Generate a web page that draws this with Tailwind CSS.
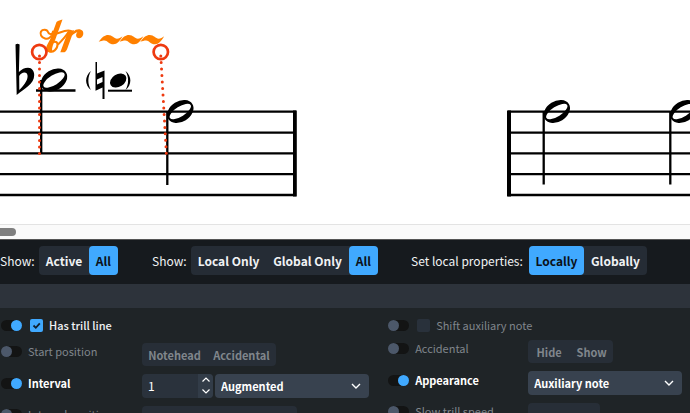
<!DOCTYPE html>
<html lang="en">
<head>
  <meta charset="UTF-8" />
  <meta name="viewport" content="width=device-width, initial-scale=1.0" />
  <title>Trill properties</title>
  <script src="https://cdn.jsdelivr.net/npm/@tailwindcss/browser@4"></script>
</head>
<body class="h-screen flex flex-col overflow-hidden bg-[#1f2427] font-['Noto_Sans_CJK_SC','Open_Sans',sans-serif] text-xs leading-4 text-[#f0f2f4]">

  <!-- Score -->
  <main class="h-56 shrink-0 overflow-hidden bg-white">
    <svg class="block h-56 w-[690px] max-w-none" viewBox="0 0 690 224" role="img" aria-label="Score">
      <defs>
        <path id="half" fill-rule="evenodd" transform="rotate(-32)" d="M-14.2 0a14.2 10.2 0 1 0 28.4 0a14.2 10.2 0 1 0 -28.4 0zM-12.2 0a12.2 4.9 0 1 0 24.4 0a12.2 4.9 0 1 0 -24.4 0z" />
        <path id="wave" d="M-.3 6.800C3 2 6 0 9 0C13.500 0 15 3.700 18 3.700C20 3.700 21.500 2.600 23.500 1.300C21 6 18 9.300 14.500 9.300C10 9.300 8.500 5.400 5.500 5.400C3.500 5.400 2 6 -.3 6.800z" />
      </defs>

      <!-- staves and barlines -->
      <path stroke="#000" stroke-width="2.3" d="M0 111.700H296M0 132.600H296M0 153.300H296M0 174.100H296M0 195H296M508 111.700H690M508 132.600H690M508 153.300H690M508 174.100H690M508 195H690" />
      <path d="M293 110.500h3.800v86h-3.800zM507 110.500h4v86h-4z" />

      <!-- notes -->
      <path stroke="#000" stroke-width="2.3" d="M41.200 80V153.500M167.300 112V185M543.700 112V184.500M670.300 112V184.500M36 90.500H75.500" />
      <use href="#half" transform="translate(54 80)" />
      <use href="#half" transform="translate(180.300 111.500)" />
      <use href="#half" transform="translate(556.800 111.500)" />
      <use href="#half" transform="translate(683.300 111.500)" />

      <!-- flat -->
      <path fill-rule="evenodd" d="M15.500 44.500Q17.400 43 19.600 44.500L18.900 72Q23 67.700 28 67.700C32 67.700 34.200 71 34.200 75C34.200 84 25 88 16.700 95zM19.200 76C21.500 71.500 27.500 71 27.600 76C27.700 81 22.500 87 19.300 90z" />

      <!-- auxiliary note in brackets -->
      <path d="M91 71C84.500 76 84.500 85 91 90C87.500 84 87.500 77 91 71zM125.500 71C132 76 132 85 125.500 90C129 84 129 77 125.500 71z" />
      <path fill-rule="evenodd" d="M95.500 62H97V73.500L104.500 70.500V99H102.500V87.500L95.500 90.800zM97 79.500V84.500L102.500 82V77z" />
      <ellipse cx="118.200" cy="80.500" rx="8.800" ry="6.300" transform="rotate(-32 118.200 80.500)" />
      <path d="M108 89.700h24v2h-24z" />

      <!-- trill mark and line -->
      <g fill="none" stroke="#ff8000" stroke-linecap="round">
        <path stroke-width="2" d="M53 31.500C51.500 38 48 39.500 45 38.500C41 37.500 39.800 34 41 31.500C42.500 29 47 29 48 32C49 35.500 55 34.500 60 32.500C64 31 68 30 71 31" />
        <path stroke-width="2" d="M48.500 51C53 53.500 57.500 49 57.500 44.500C57.500 40.500 53 41 50.500 44M57.500 45C62 40.500 66 36 68.500 32" />
      </g>
      <path fill="#ff8000" d="M56.500 22C58.500 20.500 60 20.500 62.500 19.500L55.500 39C53.800 43.500 51.500 47 52.200 52C48.500 53.500 45 50.500 46.300 47C47 44.500 49.500 41 50.500 38.500zM68 31.500L74 30L67.500 48C67 50 65.500 52.200 64.500 52.200H60.300zM68.500 39C71 32.500 75 29.200 78.500 29.200C82.300 29.200 83.800 31.500 83.200 34.500C82.600 38 79 39.200 77 37.500C75.500 36 76 33.800 77.300 32.300C75 32.500 71.500 35.500 68.500 41z" />
      <g fill="#ff8000">
        <use href="#wave" x="99" y="35" />
        <use href="#wave" x="119.800" y="35" />
        <use href="#wave" x="140.600" y="35" />
      </g>

      <!-- handles and attachment lines -->
      <g fill="none" stroke="#ee3a10">
        <circle cx="39.300" cy="52" r="7.200" stroke-width="2.700" />
        <circle cx="160.800" cy="52" r="7.200" stroke-width="2.700" />
        <path stroke-width="3" stroke-linecap="round" stroke-dasharray="0 6.500" d="M39.500 56V154M160.800 56L166.400 154" />
      </g>
    </svg>
  </main>

  <div class="h-[15px] shrink-0 border-t border-[#e3e3e3] bg-[#fafafa] pt-[3px]">
    <div class="h-2 w-4 rounded-r-full bg-[#7f7f7f]"></div>
  </div>

  <!-- Filters -->
  <div class="flex h-[45px] shrink-0 items-start border-t border-[#555] bg-[#161a1e] pt-1.5 whitespace-nowrap">
    <div class="flex items-center">
      <span class="w-[39px]">Show:</span>
      <div class="flex h-[29px] rounded bg-[#252c35] font-bold">
        <button class="w-[50px] rounded">Active</button>
        <button class="w-[29px] rounded bg-[#40a9ff] text-[#0b1219]">All</button>
      </div>
    </div>
    <div class="ml-[34px] flex items-center">
      <span class="w-[39px]">Show:</span>
      <div class="flex h-[29px] rounded bg-[#252c35] font-bold">
        <button class="w-[75px] rounded">Local Only</button>
        <button class="w-[83px] rounded">Global Only</button>
        <button class="w-[29px] rounded bg-[#40a9ff] text-[#0b1219]">All</button>
      </div>
    </div>
    <div class="ml-[33px] flex items-center">
      <span class="w-[118px]">Set local properties:</span>
      <div class="flex h-[29px] rounded bg-[#252c35] font-bold">
        <button class="w-[55px] rounded bg-[#40a9ff] text-[#0b1219]">Locally</button>
        <button class="w-[63px] rounded">Globally</button>
      </div>
    </div>
  </div>

  <div class="h-6 shrink-0 bg-[#2d333b]"></div>

  <!-- Properties -->
  <div class="grid grid-cols-[9fr_7fr] pt-[9px] text-[11px] leading-4 whitespace-nowrap text-[#80868c]">
    <section class="pl-px pr-[19px]">
      <div class="flex h-4 items-center">
        <input type="checkbox" checked aria-label="Set has trill line" class="flex h-[11px] w-[21px] appearance-none rounded-full bg-[#131414] before:size-[11px] before:rounded-full before:bg-[#4c586a] checked:before:ml-auto checked:before:bg-[#40a9ff]" />
        <label class="ml-2 flex items-center gap-1.5 font-medium text-[#f0f2f4]">
          <span class="grid size-[13px] place-items-center">
            <input type="checkbox" checked class="col-start-1 row-start-1 size-[13px] appearance-none rounded-xs bg-[#40a9ff]" />
            <svg class="col-start-1 row-start-1 size-[13px]" viewBox="0 0 13 13" fill="none" stroke="#10202e" stroke-width="1.800"><path d="M3.500 6.500l2.300 2.300l4-4.500" /></svg>
          </span>
          Has trill line
        </label>
      </div>

      <div class="mt-2.5 flex h-[23px]">
        <label class="flex h-4 w-[141px] shrink-0 items-center gap-1.5">
          <input type="checkbox" class="flex h-[11px] w-[21px] appearance-none rounded-full bg-[#131414] before:size-[11px] before:rounded-full before:bg-[#4c586a]" />
          Start position
        </label>
        <div class="flex rounded bg-[#272e37] font-bold">
          <button class="w-[65px]">Notehead</button>
          <button class="w-[69px]">Accidental</button>
        </div>
      </div>

      <div class="mt-2 flex h-6">
        <label class="flex h-[18px] w-[141px] shrink-0 items-center gap-1.5 font-bold text-white">
          <input type="checkbox" checked class="flex h-[11px] w-[21px] appearance-none rounded-full bg-[#131414] before:size-[11px] before:rounded-full before:bg-[#4c586a] checked:before:ml-auto checked:before:bg-[#40a9ff]" />
          Interval
        </label>
        <div class="flex w-[71px] shrink-0 overflow-hidden rounded bg-[#2a323c]">
          <input type="text" value="1" aria-label="Interval size" class="w-14 bg-transparent pl-1.5 text-xs text-white" />
          <div class="flex w-[15px] flex-col bg-[#323c48] text-white">
            <button class="grid h-3 place-items-center" aria-label="Increase"><svg class="h-2 w-2.5" viewBox="0 0 10 8" fill="none" stroke="currentColor" stroke-width="1.200"><path d="M1.500 5.500l3.500-3.500l3.500 3.500" /></svg></button>
            <button class="grid h-2.5 place-items-center" aria-label="Decrease"><svg class="h-2 w-2.5" viewBox="0 0 10 8" fill="none" stroke="currentColor" stroke-width="1.200"><path d="M1.500 2.500l3.500 3.500l3.500-3.500" /></svg></button>
          </div>
        </div>
        <div class="ml-0.5 grid flex-1 items-center">
          <select aria-label="Interval quality" class="col-start-1 row-start-1 h-6 appearance-none rounded bg-[#38424f] pl-1.5 font-bold text-white">
            <option>Augmented</option>
          </select>
          <svg class="pointer-events-none col-start-1 row-start-1 mr-2 h-2 w-2.5 justify-self-end" viewBox="0 0 10 8" fill="none" stroke="#fff" stroke-width="1.400"><path d="M1 2l4 4l4-4" /></svg>
        </div>
      </div>

      <div class="mt-2 flex h-[23px]">
        <label class="flex h-4 w-[141px] shrink-0 items-center gap-1.5">
          <input type="checkbox" class="flex h-[11px] w-[21px] appearance-none rounded-full bg-[#131414] before:size-[11px] before:rounded-full before:bg-[#4c586a]" />
          Interval position
        </label>
        <div class="w-[155px] rounded bg-[#272e37]"></div>
      </div>
    </section>

    <section class="pr-2">
      <div class="flex h-4 items-center">
        <input type="checkbox" aria-label="Set shift auxiliary note" class="flex h-[11px] w-[21px] appearance-none rounded-full bg-[#131414] before:size-[11px] before:rounded-full before:bg-[#4c586a]" />
        <label class="ml-2 flex items-center gap-1.5">
          <input type="checkbox" class="size-[13px] appearance-none rounded-xs bg-[#29313b]" />
          Shift auxiliary note
        </label>
      </div>

      <div class="mt-[7px] flex h-[23px]">
        <label class="flex h-4 w-[140px] shrink-0 items-center gap-1.5">
          <input type="checkbox" class="flex h-[11px] w-[21px] appearance-none rounded-full bg-[#131414] before:size-[11px] before:rounded-full before:bg-[#4c586a]" />
          Accidental
        </label>
        <div class="flex rounded bg-[#272e37] font-bold">
          <button class="w-[42px]">Hide</button>
          <button class="w-[43px]">Show</button>
        </div>
      </div>

      <div class="mt-2 flex h-6">
        <label class="flex h-[18px] w-[140px] shrink-0 items-center gap-1.5 font-bold text-white">
          <input type="checkbox" checked class="flex h-[11px] w-[21px] appearance-none rounded-full bg-[#131414] before:size-[11px] before:rounded-full before:bg-[#4c586a] checked:before:ml-auto checked:before:bg-[#40a9ff]" />
          Appearance
        </label>
        <div class="grid flex-1 items-center">
          <select aria-label="Appearance value" class="col-start-1 row-start-1 h-6 appearance-none rounded bg-[#38424f] pl-1.5 font-bold text-white">
            <option>Auxiliary note</option>
          </select>
          <svg class="pointer-events-none col-start-1 row-start-1 mr-2 h-2 w-2.5 justify-self-end" viewBox="0 0 10 8" fill="none" stroke="#fff" stroke-width="1.400"><path d="M1 2l4 4l4-4" /></svg>
        </div>
      </div>

      <div class="mt-2 flex h-[23px]">
        <label class="flex h-4 w-[140px] shrink-0 items-center gap-1.5">
          <input type="checkbox" class="flex h-[11px] w-[21px] appearance-none rounded-full bg-[#131414] before:size-[11px] before:rounded-full before:bg-[#4c586a]" />
          Slow trill speed
        </label>
        <div class="w-[72px] rounded bg-[#272e37]"></div>
      </div>
    </section>
  </div>
</body>
</html>
